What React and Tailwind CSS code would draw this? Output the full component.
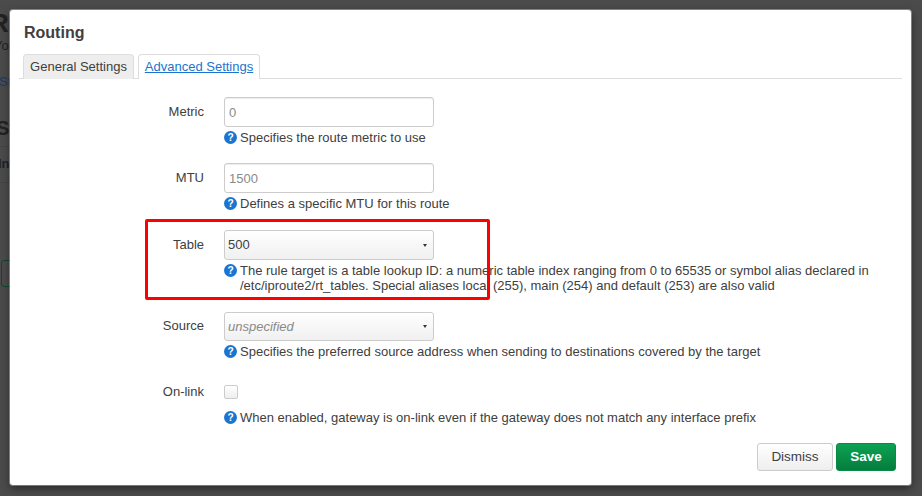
import React from "react";

const HelpIcon = () => (
  <svg viewBox="0 0 16 16" className="w-[13px] h-[13px] shrink-0 mt-[1px]">
    <circle cx="8" cy="8" r="8" fill="#1b75d0" />
    <text x="8" y="12.5" textAnchor="middle" fontSize="12.5" fontWeight="700" fill="#fff" fontFamily="Liberation Sans">?</text>
  </svg>
);

const Caret = () => <span className="ml-auto w-0 h-0 border-x-[2.5px] border-x-transparent border-t-[3px] border-t-[#333]" />;

const Row = ({ label, children, help, className, labelClass }) => (
  <div className={"flex " + className}>
    <div className={"w-[185px] shrink-0 text-right text-[13px] text-[#404040] leading-[20px] " + labelClass}>{label}</div>
    <div className="ml-[20px] w-[670px]">
      {children}
      <div className="flex gap-[3px] mt-[3px] text-[13px] leading-[15px] text-[#404040]">
        <HelpIcon />
        <div>{help}</div>
      </div>
    </div>
  </div>
);

const Input = ({ value }) => (
  <div className="w-[210px] h-[30px] border border-[#ccc] rounded-[3px] bg-white shadow-[inset_0_1px_1px_rgba(0,0,0,0.075)] px-[4px] pt-[1px] flex items-center text-[13px] text-[#8a8a8a]">{value}</div>
);

const Select = ({ value, italic }) => (
  <div className={"w-[210px] border border-[#ccc] rounded-[3px] bg-gradient-to-b from-white to-[#f0f0f0] pl-[3px] pr-[6px] flex items-center text-[13px] " + (italic ? "h-[29px] italic text-[#8a8a8a]" : "h-[30px] text-[#404040]")}>
    <span>{value}</span>
    <Caret />
  </div>
);

export default function App() {
  return (
    <div className="relative w-[922px] h-[496px] overflow-hidden bg-[#4b4b4b] p-[10px] font-['Liberation_Sans',Arial,sans-serif]">
      {/* page behind the dialog */}
      <div className="absolute left-[-10px] top-[8px] text-[26px] leading-[30px] font-bold text-[#222]">R</div>
      <div className="absolute left-[-6px] top-[36px] text-[13px] text-[#222]">You</div>
      <div className="absolute left-[-1px] top-[72px] text-[13px] text-[#123e66]">St</div>
      <div className="absolute left-[-4px] top-[113px] text-[20px] font-bold text-[#222]">St</div>
      <div className="absolute left-[-2px] top-[154px] text-[13px] font-bold text-[#222]">In</div>
      <div className="absolute left-0 top-[146px] w-[10px] h-px bg-[#444]" />
      <div className="absolute left-0 top-[182px] w-[10px] h-px bg-[#444]" />
      <div className="absolute left-[1px] top-[260px] w-[12px] h-[27px] border border-[#0c4a2a] rounded-[3px]" />

      <div className="relative w-[901px] h-[475px] bg-white rounded-[3px] shadow-[0_0_0_1px_rgba(255,255,255,0.35),0_3px_9px_rgba(0,0,0,0.5)] flex flex-col px-[9px]">
        <h3 className="mt-[13px] ml-[5px] text-[16px] leading-[20px] font-bold text-[#404040]">Routing</h3>
        <div className="mt-[11px] flex gap-[4px] pl-[4px] h-[25px] border-b border-[#ddd]">
          <div className="h-[25px] w-[111px] border border-[#ddd] border-b-0 rounded-t-[4px] bg-[#eee] text-[13px] text-[#404040] flex items-center justify-center">General Settings</div>
          <div className="h-[25px] w-[122px] border border-[#ddd] border-b-0 rounded-t-[4px] bg-white text-[13px] text-[#1b75d0] underline flex items-center justify-center">Advanced Settings</div>
        </div>
        <Row label="Metric" className="mt-[18px]" labelClass="pt-[5px]" help="Specifies the route metric to use">
          <Input value="0" />
        </Row>
        <Row label="MTU" className="mt-[18px]" labelClass="pt-[5px]" help="Defines a specific MTU for this route">
          <Input value="1500" />
        </Row>
        <Row label="Table" className="mt-[19px]" labelClass="pt-[5px]" help={<>The rule target is a table lookup ID: a numeric table index ranging from 0 to 65535 or symbol alias declared in<br />/etc/iproute2/rt_tables. Special aliases local (255), main (254) and default (253) are also valid</>}>
          <Select value="500" />
        </Row>
        <Row label="Source" className="mt-[19px]" labelClass="pt-[4px]" help="Specifies the preferred source address when sending to destinations covered by the target">
          <Select value="unspecified" italic />
        </Row>
        <Row label="On-link" className="mt-[23px]" help="When enabled, gateway is on-link even if the gateway does not match any interface prefix">
          <div className="h-[25px] flex items-start pt-[3px]">
            <div className="w-[14px] h-[14px] border border-[#ccc] rounded-[2px] bg-gradient-to-b from-white to-[#eee]" />
          </div>
        </Row>
        <div className="mt-auto mb-[14px] flex justify-end gap-[3px] pr-[6px]">
          <div className="w-[76px] h-[28px] border border-[#ccc] rounded-[3px] bg-gradient-to-b from-white to-[#eee] text-[13.5px] text-[#404040] flex items-center justify-center">Dismiss</div>
          <div className="w-[60px] h-[28px] border border-[#078a44] rounded-[3px] bg-gradient-to-b from-[#0ca252] to-[#067d3d] text-[13.5px] font-bold text-white flex items-center justify-center">Save</div>
        </div>

        {/* red annotation drawn on the screenshot */}
        <div className="absolute left-[135px] top-[209px] w-[345px] h-[81px] border-[3px] border-[#f00] rounded-[2px]" />
      </div>
    </div>
  );
}
